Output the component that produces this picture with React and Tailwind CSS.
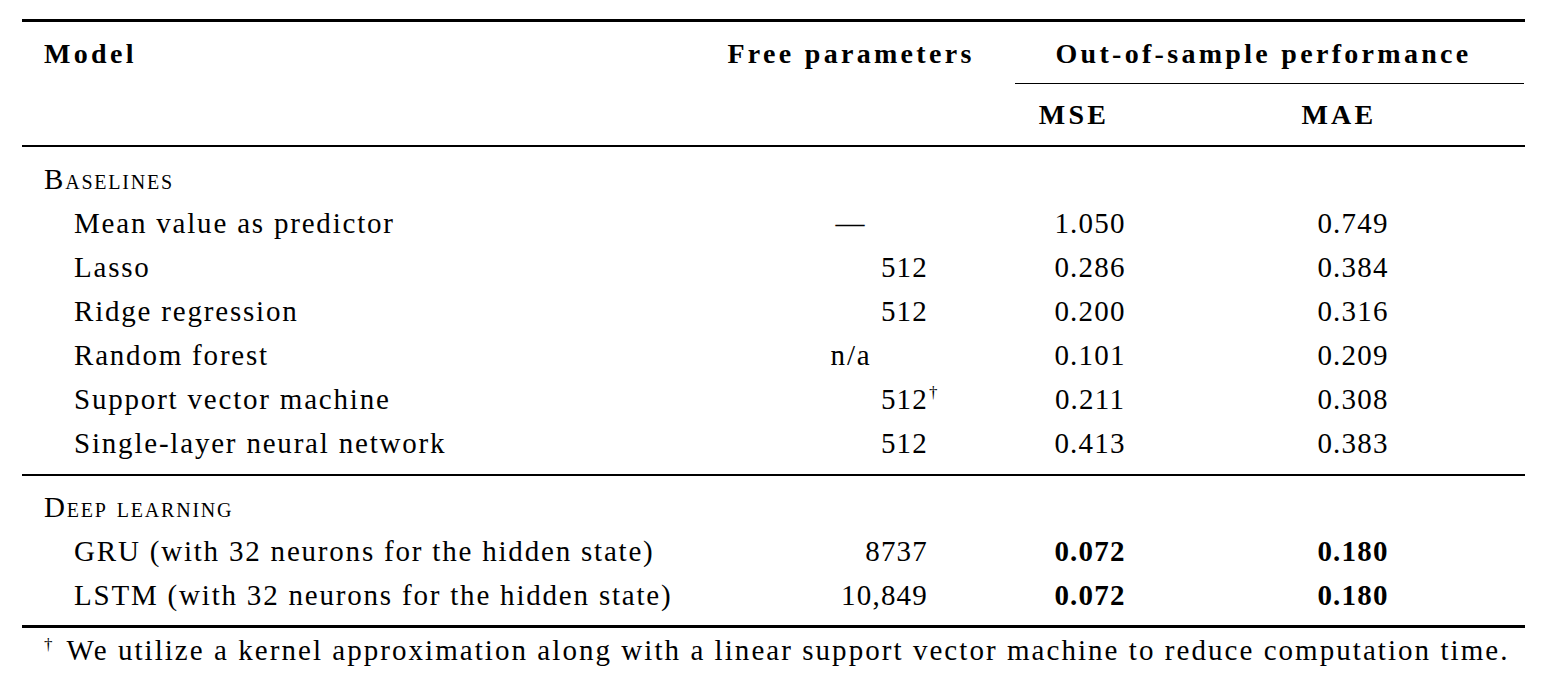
import React from "react";

const baselines = [
  { name: "Mean value as predictor", fp: "—", fpType: "center", mse: "1.050", mae: "0.749" },
  { name: "Lasso", fp: "512", fpType: "right", mse: "0.286", mae: "0.384" },
  { name: "Ridge regression", fp: "512", fpType: "right", mse: "0.200", mae: "0.316" },
  { name: "Random forest", fp: "n/a", fpType: "center", mse: "0.101", mae: "0.209" },
  { name: "Support vector machine", fp: "512", fpType: "right", dagger: true, mse: "0.211", mae: "0.308" },
  { name: "Single-layer neural network", fp: "512", fpType: "right", mse: "0.413", mae: "0.383" },
];

const deep = [
  { name: "GRU (with 32 neurons for the hidden state)", fp: "8737", fpType: "right", mse: "0.072", mae: "0.180", bold: true },
  { name: "LSTM (with 32 neurons for the hidden state)", fp: "10,849", fpType: "right", mse: "0.072", mae: "0.180", bold: true },
];

function Row({ r }) {
  return (
    <div className="flex h-[44px] leading-[44px]">
      <div className="w-[678px] pl-[52px] whitespace-nowrap">{r.name}</div>
      <div className="w-[302px]">
        {r.fpType === "center" ? (
          <div className="w-[302px] text-center">{r.fp}</div>
        ) : (
          <div className="w-[228px] text-right tracking-[1.2px]">
            <span className="relative">
              {r.fp}
              {r.dagger && (
                <span className="absolute left-full top-[-12px] text-[17px] pl-[1px]">†</span>
              )}
            </span>
          </div>
        )}
      </div>
      <div className="w-[261px]">
        <div className={"w-[176px] text-center tracking-[1.2px] " + (r.bold ? "font-bold" : "")}>{r.mse}</div>
      </div>
      <div className="w-[262px]">
        <div className={"w-[180px] text-center tracking-[1.2px] " + (r.bold ? "font-bold" : "")}>{r.mae}</div>
      </div>
    </div>
  );
}

function SectionTitle({ children }) {
  return (
    <div className="flex h-[44px] leading-[44px]">
      <div className="pl-[22px] [font-variant-caps:small-caps] whitespace-nowrap">{children}</div>
    </div>
  );
}

export default function App() {
  return (
    <div className="w-[1544px] h-[676px] bg-white text-black font-['Liberation_Serif',serif] text-[29px] tracking-[1.8px] pt-[19px] pl-[22px] pr-[19px] overflow-hidden">
      <div className="h-[3px] bg-black" />
      {/* header row 1 */}
      <div className="flex h-[61px] items-center pt-[2px] font-bold text-[28px] tracking-[3.3px]">
        <div className="w-[678px] pl-[22px]">Model</div>
        <div className="w-[302px] text-center whitespace-nowrap">Free parameters</div>
        <div className="w-[523px] text-center whitespace-nowrap">Out-of-sample performance</div>
      </div>
      {/* cmidrule */}
      <div className="flex">
        <div className="w-[993px]" />
        <div className="w-[509px] h-[1px] bg-black" />
      </div>
      {/* header row 2 */}
      <div className="flex h-[61px] items-center font-bold text-[28px] tracking-[3.3px]">
        <div className="w-[980px]" />
        <div className="w-[261px]">
          <div className="w-[144px] text-center">MSE</div>
        </div>
        <div className="w-[262px]">
          <div className="w-[152px] text-center">MAE</div>
        </div>
      </div>
      <div className="h-[2px] bg-black" />
      <div className="h-[10px]" />
      <SectionTitle>Baselines</SectionTitle>
      {baselines.map((r) => (
        <Row key={r.name} r={r} />
      ))}
      <div className="h-[9px]" />
      <div className="h-[2px] bg-black" />
      <div className="h-[9px]" />
      <SectionTitle>Deep learning</SectionTitle>
      {deep.map((r) => (
        <Row key={r.name} r={r} />
      ))}
      <div className="h-[8px]" />
      <div className="h-[3px] bg-black" />
      <div className="flex h-[44px] leading-[44px] pl-[22px] whitespace-nowrap tracking-[2.05px]">
        <span className="relative pr-[12px]">
          <span className="relative top-[-10px] text-[17px]">†</span>
        </span>
        <span>We utilize a kernel approximation along with a linear support vector machine to reduce computation time.</span>
      </div>
    </div>
  );
}
